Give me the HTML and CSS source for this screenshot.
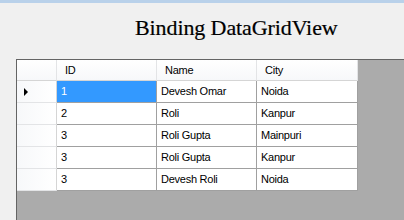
FILE: index.html
```html
<!DOCTYPE html>
<html>
<head>
<meta charset="utf-8">
<link rel="stylesheet" href="styles.css">
</head>
<body>
<div class="frame"></div>
<div class="form">
  <h1 class="title">Binding DataGridView</h1>
  <div class="dgv">
    <div class="table">
      <div class="corner"></div>
      <div class="colhead">ID</div>
      <div class="colhead">Name</div>
      <div class="colhead">City</div>

      <div class="rowhead"><span class="arrow"></span></div>
      <div class="cell sel">1</div>
      <div class="cell">Devesh Omar</div>
      <div class="cell">Noida</div>

      <div class="rowhead"></div>
      <div class="cell">2</div>
      <div class="cell">Roli</div>
      <div class="cell">Kanpur</div>

      <div class="rowhead"></div>
      <div class="cell">3</div>
      <div class="cell">Roli Gupta</div>
      <div class="cell">Mainpuri</div>

      <div class="rowhead"></div>
      <div class="cell">3</div>
      <div class="cell">Roli Gupta</div>
      <div class="cell">Kanpur</div>

      <div class="rowhead"></div>
      <div class="cell">3</div>
      <div class="cell">Devesh Roli</div>
      <div class="cell">Noida</div>
    </div>
  </div>
</div>
</body>
</html>
```
FILE: styles.css
```css
html, body {
  margin: 0;
  padding: 0;
  width: 404px;
  height: 220px;
  overflow: hidden;
  background: #f0f0f0;
}
.frame {
  height: 3px;
  background: #b9d1ea;
}
.form {
  display: flex;
  flex-direction: column;
  height: 217px;
}
.title {
  margin: 0;
  height: 56px;
  box-sizing: border-box;
  padding: 13px 0 0 135px;
  font-family: "Liberation Serif", serif;
  font-weight: normal;
  font-size: 22px;
  line-height: 24px;
  letter-spacing: -0.1px;
  color: #000;
  -webkit-text-stroke: 0.2px #000;
}
.dgv {
  flex: 1;
  margin-left: 16px;
  border-top: 1px solid #646464;
  border-left: 1px solid #646464;
  background: #ababab;
}
.table {
  display: grid;
  grid-template-columns: 40px 100px 100px 101px;
  grid-template-rows: 21px repeat(5, 22px);
  width: 341px;
  font-family: "Liberation Sans", Arial, sans-serif;
  font-size: 11px;
  letter-spacing: -0.25px;
  color: #000;
}
.corner, .colhead {
  box-sizing: border-box;
  background: linear-gradient(#ffffff, #f7f8fa);
  border-right: 1px solid #e3e4e6;
  border-bottom: 1px solid #d5d5d5;
}
.colhead {
  padding-left: 8px;
  line-height: 20px;
}
.rowhead {
  box-sizing: border-box;
  background: linear-gradient(90deg, #f7f8fa, #ffffff);
  border-right: 1px solid #d5d5d5;
  border-bottom: 1px solid #e3e4e6;
  display: flex;
  align-items: center;
  padding-left: 7px;
}
.arrow {
  width: 0;
  height: 0;
  border-top: 4px solid transparent;
  border-bottom: 4px solid transparent;
  border-left: 4px solid #000;
}
.cell {
  box-sizing: border-box;
  background: #fff;
  border-right: 1px solid #a0a0a0;
  border-bottom: 1px solid #a0a0a0;
  padding-left: 4px;
  line-height: 21px;
  white-space: nowrap;
}
.cell.sel {
  background: #3399ff;
  color: #fff;
}
```
